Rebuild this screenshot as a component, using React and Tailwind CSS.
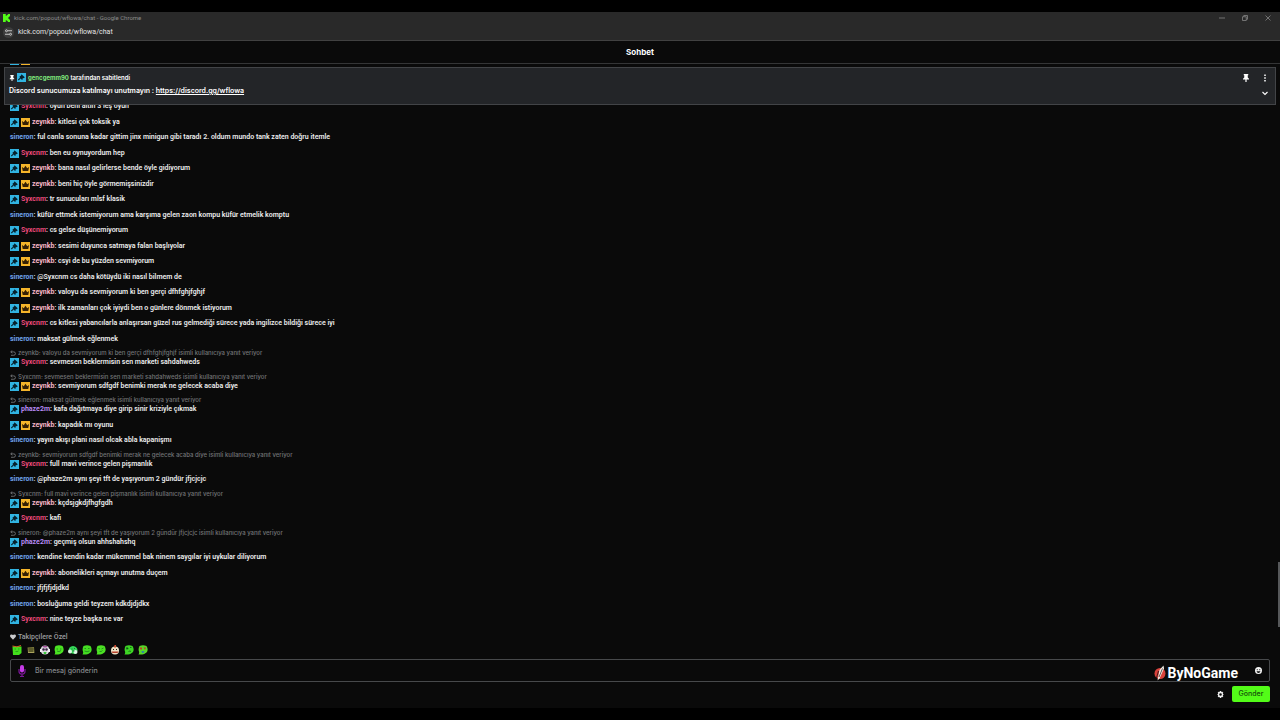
import React from "react";

const userColors = {
  Syxcnm: "text-[#e9497a]",
  zeynkb: "text-[#f8b8c8]",
  sineron: "text-[#6fa3ea]",
  phaze2m: "text-[#b78af5]",
};

const userBadges = {
  Syxcnm: ["mod"],
  zeynkb: ["mod", "crown"],
  sineron: [],
  phaze2m: ["mod"],
};

const messages = [
  { user: "Syxcnm", text: "oyun beni altin 3 leş oyun" },
  { user: "zeynkb", text: "kitlesi çok toksik ya" },
  { user: "sineron", text: "ful canla sonuna kadar gittim jinx minigun gibi taradı 2. oldum mundo tank zaten doğru itemle" },
  { user: "Syxcnm", text: "ben eu oynuyordum hep" },
  { user: "zeynkb", text: "bana nasıl gelirlerse bende öyle gidiyorum" },
  { user: "zeynkb", text: "beni hiç öyle görmemişsinizdir" },
  { user: "Syxcnm", text: "tr sunucuları mlsf klasik" },
  { user: "sineron", text: "küfür ettmek istemiyorum ama karşıma gelen zaon kompu küfür etmelik komptu" },
  { user: "Syxcnm", text: "cs gelse düşünemiyorum" },
  { user: "zeynkb", text: "sesimi duyunca satmaya falan başlıyolar" },
  { user: "zeynkb", text: "csyi de bu yüzden sevmiyorum" },
  { user: "sineron", text: "@Syxcnm cs daha kötüydü iki nasıl bilmem de" },
  { user: "zeynkb", text: "valoyu da sevmiyorum ki ben gerçi dfhfghjfghjf" },
  { user: "zeynkb", text: "ilk zamanları çok iyiydi ben o günlere dönmek istiyorum" },
  { user: "Syxcnm", text: "cs kitlesi yabancılarla anlaşırsan güzel rus gelmediği sürece yada ingilizce bildiği sürece iyi" },
  { user: "sineron", text: "maksat gülmek eğlenmek" },
  { user: "Syxcnm", text: "sevmesen beklermisin sen marketi sahdahweds", reply: "zeynkb: valoyu da sevmiyorum ki ben gerçi dfhfghjfghjf" },
  { user: "zeynkb", text: "sevmiyorum sdfgdf benimki merak ne gelecek acaba diye", reply: "Syxcnm: sevmesen beklermisin sen marketi sahdahweds" },
  { user: "phaze2m", text: "kafa dağıtmaya diye girip sinir kriziyle çıkmak", reply: "sineron: maksat gülmek eğlenmek" },
  { user: "zeynkb", text: "kapadık mı oyunu" },
  { user: "sineron", text: "yayın akışı plani nasıl olcak abla kapanişmı" },
  { user: "Syxcnm", text: "full mavi verince gelen pişmanlık", reply: "zeynkb: sevmiyorum sdfgdf benimki merak ne gelecek acaba diye" },
  { user: "sineron", text: "@phaze2m aynı şeyi tft de yaşıyorum 2 gündür jfjcjcjc" },
  { user: "zeynkb", text: "kçdsjgkdjfhgfgdh", reply: "Syxcnm: full mavi verince gelen pişmanlık" },
  { user: "Syxcnm", text: "kafi" },
  { user: "phaze2m", text: "geçmiş olsun ahhshahshq", reply: "sineron: @phaze2m aynı şeyi tft de yaşıyorum 2 gündür jfjcjcjc" },
  { user: "sineron", text: "kendine kendin kadar mükemmel bak ninem saygılar iyi uykular diliyorum" },
  { user: "zeynkb", text: "abonelikleri açmayı unutma duçem" },
  { user: "sineron", text: "jfjfjfjdjdkd" },
  { user: "sineron", text: "bosluğuma geldi teyzem kdkdjdjdkx" },
  { user: "Syxcnm", text: "nine teyze başka ne var" },
];

function ModBadge() {
  return (
    <svg viewBox="0 0 18 18" className="size-[9px] shrink-0">
      <path d="M0 0h18v18H0z" fill="#31b4e2" />
      <path d="M9 2.5l6.5 6-2 2.2-1.3-.6-1.2 1.2.4 1.4-1.3 1.3-3-3-3.6 3.8-1.6-1.6L6 9.5 4.8 7.4l2-1.2L8 5z" fill="#06202c" />
    </svg>
  );
}

function CrownBadge() {
  return (
    <svg viewBox="0 0 18 18" className="size-[9px] shrink-0">
      <path d="M0 0h18v18H0z" fill="#f5b52a" />
      <path d="M1.8 6l3.7 2.4L9 3.5l3.5 4.9L16.2 6l-1.7 8h-11z" fill="#352004" />
    </svg>
  );
}

function Badge({ type }) {
  return type === "mod" ? <ModBadge /> : <CrownBadge />;
}

function PinIcon({ className }) {
  return (
    <svg viewBox="0 0 16 16" className={className} fill="currentColor">
      <path d="M3.5 0h9v2.5h-1V7L14 9.5V11H9.2v5H6.800v-5H2V9.5L4.5 7V2.5h-1z" />
    </svg>
  );
}

function ReplyIcon() {
  return (
    <svg viewBox="0 0 12 12" className="size-[6px] shrink-0" fill="none" stroke="currentColor" strokeWidth="1.8">
      <path d="M4.5 1L1.5 3.8l3 2.7M1.5 3.8h6a3.2 3.2 0 0 1 0 6.7H2" />
    </svg>
  );
}

function Message({ user, text, reply }) {
  return (
    <li className="shrink-0">
      {reply && (
        <div className="flex h-2 items-center gap-0.5 text-[6px] leading-[8px] font-medium text-[#737577]">
          <ReplyIcon />
          <span className="whitespace-nowrap">{reply} isimli kullanıcıya yanıt veriyor</span>
        </div>
      )}
      <div className="flex h-[11px] items-center gap-0.5 font-[Roboto,sans-serif] text-[7px] leading-[11px] font-semibold text-[#ededed]">
        {userBadges[user].map((type) => (
          <Badge key={type} type={type} />
        ))}
        <p className="whitespace-nowrap">
          <span className={"font-bold " + userColors[user]}>{user}</span>: {text}
        </p>
      </div>
    </li>
  );
}

function TitleBar() {
  return (
    <div className="border-b border-[#414141] bg-[#292929] font-[Roboto,sans-serif]">
      <div className="flex h-3 items-center justify-between pl-[3px] pr-[9px] text-[#8b8b8b]">
        <div className="flex items-center gap-1">
          <svg viewBox="0 0 14 16" className="h-2 w-[7px]" fill="#53fc18">
            <path d="M0 0h5.5v3.5h2V1.800h2V0H14v5h-2v2h-2v2h2v2h2v5H9.5v-1.8h-2v-1.7h-2V16H0z" />
          </svg>
          <span className="text-[6px] leading-[12px]">kick.com/popout/wflowa/chat - Google Chrome</span>
        </div>
        <div className="flex items-center gap-[17px]">
          <button aria-label="Minimize">
            <svg viewBox="0 0 12 12" className="size-[6px]" fill="none" stroke="currentColor" strokeWidth="1.5">
              <path d="M0 6h12" />
            </svg>
          </button>
          <button aria-label="Restore">
            <svg viewBox="0 0 12 12" className="size-[6px]" fill="none" stroke="currentColor" strokeWidth="1.5">
              <path d="M1 3.5h7.5V11H1zM3.5 3.5V1H11v7.5H8.5" />
            </svg>
          </button>
          <button aria-label="Close">
            <svg viewBox="0 0 12 12" className="size-[6px]" fill="none" stroke="currentColor" strokeWidth="1.5">
              <path d="M1 1l10 10M11 1L1 11" />
            </svg>
          </button>
        </div>
      </div>
      <div className="flex h-4 items-center gap-1 pl-[3px]">
        <button aria-label="Site information" className="flex size-[11px] items-center justify-center rounded-full bg-[#3d3d3d] text-[#d6d6d6]">
          <svg viewBox="0 0 14 14" className="size-[7px]" fill="none" stroke="currentColor" strokeWidth="1.8">
            <path d="M6 3.5h8M0 10.5h8" />
            <circle cx="3" cy="3.5" r="2" />
            <circle cx="11" cy="10.5" r="2" />
          </svg>
        </button>
        <span className="text-[7px] leading-[16px] text-[#e4e4e4]">kick.com/popout/wflowa/chat</span>
      </div>
    </div>
  );
}

function PinnedMessage() {
  return (
    <section className="relative z-10 mx-1 flex h-[38px] shrink-0 justify-between border border-[#424447] bg-[#232528] py-1 pr-[7px] pl-1 text-white">
      <div>
        <div className="flex h-[11px] items-center gap-0.5 text-[6px] leading-[11px] font-semibold">
          <PinIcon className="size-[6px]" />
          <ModBadge />
          <p>
            <span className="font-bold text-[#7fe87c]">gencgemm90</span> tarafından sabitlendi
          </p>
        </div>
        <p className="mt-px text-[7px] leading-[13px] font-semibold">
          Discord sunucumuza katılmayı unutmayın :{" "}
          <a href="https://discord.gg/wflowa" className="underline">https://discord.gg/wflowa</a>
        </p>
      </div>
      <div className="flex flex-col items-end gap-2">
        <div className="flex h-[11px] items-center gap-3">
          <button aria-label="Unpin">
            <PinIcon className="size-2" />
          </button>
          <button aria-label="More">
            <svg viewBox="0 0 12 16" className="h-2 w-[6px]" fill="currentColor">
              <path d="M4.5 1h3v3h-3zM4.5 6.5h3v3h-3zM4.5 12h3v3h-3z" />
            </svg>
          </button>
        </div>
        <button aria-label="Expand">
          <svg viewBox="0 0 12 10" className="h-[5px] w-[6px]" fill="none" stroke="currentColor" strokeWidth="2.2">
            <path d="M1 2l5 5 5-5" />
          </svg>
        </button>
      </div>
    </section>
  );
}

const blob = "M3 2q7-3 14 0q4 6 1 12q-5 6-17 5q2-3 1-6q-2-5 1-11z";

const emotes = [
  {
    name: "halo",
    art: (
      <>
        <path d="M1 3h18v13l-5 4H2z" fill="#43e01c" />
        <path d="M1 2q9 4 17-1" stroke="#d45a28" strokeWidth="2" fill="none" />
        <path d="M5 8h3M12 8h3M7 13q3 1 6-1" stroke="#1f8a16" strokeWidth="1.5" fill="none" />
      </>
    ),
  },
  {
    name: "box",
    art: (
      <>
        <path d="M3 5l13-1 1 12H4z" fill="#7c7a3c" />
        <path d="M5 8h10M6 12h8" stroke="#23230e" strokeWidth="1.5" />
        <path d="M4 15h12" stroke="#b9b269" strokeWidth="1.5" />
      </>
    ),
  },
  {
    name: "raccoon",
    art: (
      <>
        <circle cx="10" cy="10" r="9" fill="#d8d7dc" />
        <path d="M0 8h5v6H0zM15 8h5v6h-5z" fill="#f1eff4" />
        <path d="M5 2h10l-2 3H7z" fill="#a34c9a" />
        <circle cx="7" cy="9" r="2.5" fill="#3b2346" />
        <circle cx="13" cy="9" r="2.5" fill="#3b2346" />
        <path d="M7 14h6l-1 4H8z" fill="#39c83a" />
      </>
    ),
  },
  {
    name: "smile",
    art: (
      <>
        <path d={blob} fill="#4be322" />
        <path d="M5 8h3M12 8h3M6 12q4 3 8-1" stroke="#1b7a1c" strokeWidth="1.5" fill="none" />
      </>
    ),
  },
  {
    name: "cloud",
    art: (
      <>
        <path d="M1 12Q1 3 10 2q9 1 9 9-2 5-6 7L4 16z" fill="#35d958" />
        <circle cx="4" cy="13" r="4" fill="#d9f3e0" />
        <circle cx="15" cy="14" r="4" fill="#dff7e6" />
        <path d="M7 8h2M12 7h2M9 12h4" stroke="#0d562c" strokeWidth="1.5" />
      </>
    ),
  },
  {
    name: "happy",
    art: (
      <>
        <path d={blob} fill="#44dc22" />
        <path d="M5 7h3M12 7h3M5 12q5 3 10 0" stroke="#1b7a1c" strokeWidth="1.5" fill="none" />
      </>
    ),
  },
  {
    name: "wink",
    art: (
      <>
        <path d={blob} fill="#4ce123" />
        <path d="M5 7l3 1M11 8l4-2M7 13q4 1 6-2" stroke="#1b7a1c" strokeWidth="1.5" fill="none" />
      </>
    ),
  },
  {
    name: "clown",
    art: (
      <>
        <circle cx="10" cy="11" r="8" fill="#eee3c6" />
        <path d="M9 0h3v5H8z" fill="#d04a2e" />
        <path d="M3 13h14l-2 3H5z" fill="#b6402b" />
        <path d="M6 9h2M12 9h2" stroke="#2d2119" strokeWidth="2" />
      </>
    ),
  },
  {
    name: "think",
    art: (
      <>
        <path d={blob} fill="#3dd524" />
        <path d="M4 5h4l1 3-4 1z" fill="#124f1d" />
        <path d="M12 5h3M9 13q3-2 5 0" stroke="#104f15" strokeWidth="1.5" fill="none" />
      </>
    ),
  },
  {
    name: "love",
    art: (
      <>
        <path d={blob} fill="#57d829" />
        <path d="M3 5h5v4H5zM11 5h5l-2 5z" fill="#c53c25" />
        <path d="M7 12h6l-2 4H8z" fill="#2e86a5" />
      </>
    ),
  },
];

function ByNoGameLogo() {
  return (
    <div className="pointer-events-none absolute top-[5px] right-[31px] flex items-center gap-0.5">
      <svg viewBox="0 0 24 32" className="h-4 w-3">
        <circle cx="12" cy="17" r="11" fill="#d8423c" />
        <path d="M7 31L11 10 19 1l1 6-9 20z" fill="#f4efe8" />
        <path d="M10 24l7-17" stroke="#29231f" strokeWidth="1.5" />
        <path d="M4 29L9 12" stroke="#0b0c0d" strokeWidth="1.5" />
      </svg>
      <span className="font-[Roboto,sans-serif] text-[14px] leading-[16px] font-bold text-white">ByNoGame</span>
    </div>
  );
}

function ChatFooter() {
  return (
    <footer className="shrink-0 px-2.5 pt-1 pb-1.5">
      <div className="flex h-3 items-center gap-0.5 font-[Roboto,sans-serif] text-[7px] leading-[12px] font-medium text-[#9b9d9f]">
        <svg viewBox="0 0 12 12" className="size-[6px]" fill="#c9cbcd">
          <path d="M6 11.5L.8 6Q-.6 3.5 1 1.7 3.5-.3 6 2 8.5-.3 11 1.7q1.600 1.800.2 4.300z" />
        </svg>
        <span>Takipçilere Özel</span>
      </div>
      <div className="mt-0.5 flex gap-1 pl-0.5">
        {emotes.map((emote) => (
          <button key={emote.name} aria-label={emote.name}>
            <svg viewBox="0 0 20 20" className="size-2.5">{emote.art}</svg>
          </button>
        ))}
      </div>
      <div className="relative mt-1 flex h-[23px] items-center gap-[9px] rounded-xs border border-[#47494b] px-[7px]">
        <svg viewBox="0 0 16 24" className="h-3 w-2 shrink-0">
          <path d="M2 8v5q0 5 6 5t6-5V8M8 18v5M4 23h8" stroke="#7a1696" strokeWidth="2.5" fill="none" />
          <rect x="4" y="0" width="8" height="15" rx="4" fill="#c63be8" />
        </svg>
        <input
          type="text"
          aria-label="Bir mesaj gönderin"
          placeholder="Bir mesaj gönderin"
          className="min-w-0 flex-1 bg-transparent text-[7px] leading-[16px] font-medium text-white outline-none placeholder:text-[#85888b]"
        />
        <button aria-label="Emotes">
          <svg viewBox="0 0 14 14" className="size-[7px]">
            <circle cx="7" cy="7" r="7" fill="#f2f2f2" />
            <path d="M3.5 4.5h2v2h-2zM8.5 4.5h2v2h-2zM3 8.5h8q-1 3.5-4 3.5T3 8.5z" fill="#0b0c0d" />
          </svg>
        </button>
        <ByNoGameLogo />
      </div>
      <div className="mt-1 flex items-center justify-end gap-2">
        <button aria-label="Settings">
          <svg viewBox="0 0 16 16" className="size-[7px]">
            <path
              fillRule="evenodd"
              fill="#f0f0f0"
              d="M6.5 0h3l.6 2.2 2.3-.5 2 2.5-1.2 2L15.5 8l-2.3 1.8 1.2 2-2 2.5-2.3-.5L9.5 16h-3l-.6-2.2-2.3.5-2-2.5 1.2-2L.5 8l2.3-1.8-1.2-2 2-2.5 2.3.5zM8 5a3 3 0 1 0 0 6 3 3 0 0 0 0-6z"
            />
          </svg>
        </button>
        <button className="h-4 w-[38px] rounded-xs bg-[#53fc18] text-[7px] leading-[16px] font-medium text-[#14500a]">
          Gönder
        </button>
      </div>
    </footer>
  );
}

export default function App() {
  return (
    <div className="flex h-screen flex-col overflow-hidden bg-black py-3 font-[Inter,sans-serif]">
      <TitleBar />
      <main className="relative flex min-h-0 flex-1 flex-col bg-[#0a0a0a]">
        <header className="flex h-[23px] shrink-0 items-center justify-center border-b border-[#343536]">
          <h1 className="text-[8px] leading-[12px] font-bold text-white">Sohbet</h1>
        </header>

        {/* tail of the row scrolled under the pinned message */}
        <div className="mb-0.5 flex h-px shrink-0 items-end gap-0.5 overflow-hidden pl-2.5">
          <ModBadge />
          <CrownBadge />
        </div>

        <PinnedMessage />

        <ul className="-mt-1 mb-0.5 flex min-h-0 flex-1 flex-col justify-between pl-2.5">
          {messages.map((message, i) => (
            <Message key={i} {...message} />
          ))}
        </ul>

        <ChatFooter />

        {/* scrollbar thumb */}
        <div className="absolute right-0 bottom-[81px] h-[65px] w-0.5 bg-[#56585a]" />
      </main>
    </div>
  );
}
